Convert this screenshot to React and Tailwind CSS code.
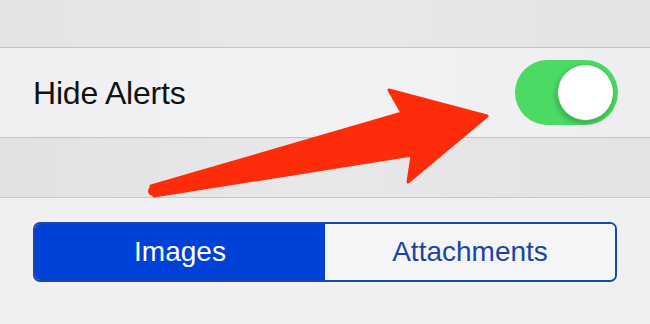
const Arrow = () => (
  <svg
    className="absolute left-0 top-0 pointer-events-none"
    width="650"
    height="324"
    viewBox="0 0 650 324"
  >
    <path
      d="M151 186 L402 113 L389 90 L487 116 L408 182 L412 155 L154 196 Z"
      fill="#fe2c0a"
      stroke="#fe2c0a"
      strokeWidth="3"
      strokeLinejoin="round"
    />
    <circle cx="153" cy="191" r="5" fill="#fe2c0a" />
  </svg>
);

const Toggle = () => (
  <div className="w-[103px] h-[65px] rounded-full bg-[#4cd964] flex items-center justify-end pr-[4px]">
    <div className="w-[57px] h-[57px] rounded-full bg-white border border-[#3fc457] shadow-[-1px_3px_5px_rgba(0,0,0,0.22)]" />
  </div>
);

export default function App() {
  return (
    <div
      className="relative w-[650px] h-[324px] overflow-hidden bg-[#f0f0f2]"
      style={{ fontFamily: '"Liberation Sans", Arial, sans-serif' }}
    >
      <div className="h-[47px] bg-gradient-to-r from-[#e4e4e6] via-[#e9e9eb] to-[#e3e3e5]" />
      <div className="h-px bg-[#c4c4c7]" />
      <div className="h-[89px] bg-gradient-to-r from-[#efeff1] via-[#f3f3f5] to-[#eeeef0] flex items-center justify-between pl-[33px] pr-[32px]">
        <span className="text-[32px] text-[#111111] tracking-[-0.2px]">Hide Alerts</span>
        <Toggle />
      </div>
      <div className="h-px bg-[#c4c4c7]" />
      <div className="h-[59px] bg-gradient-to-r from-[#e2e2e4] via-[#e8e8ea] to-[#e3e3e5]" />
      <div className="h-px bg-[#c9c9cc]" />
      <div className="pt-[24px] px-[33px]">
        <div className="flex h-[60px] rounded-[7px] border-2 border-[#1b48a8] overflow-hidden">
          <div className="flex-1 flex items-center justify-center bg-[#0042d8] text-white text-[28px]">
            Images
          </div>
          <div className="flex-1 flex items-center justify-center bg-[#f5f5f7] text-[#1b45a4] text-[28px]">
            Attachments
          </div>
        </div>
      </div>
      <Arrow />
    </div>
  );
}
